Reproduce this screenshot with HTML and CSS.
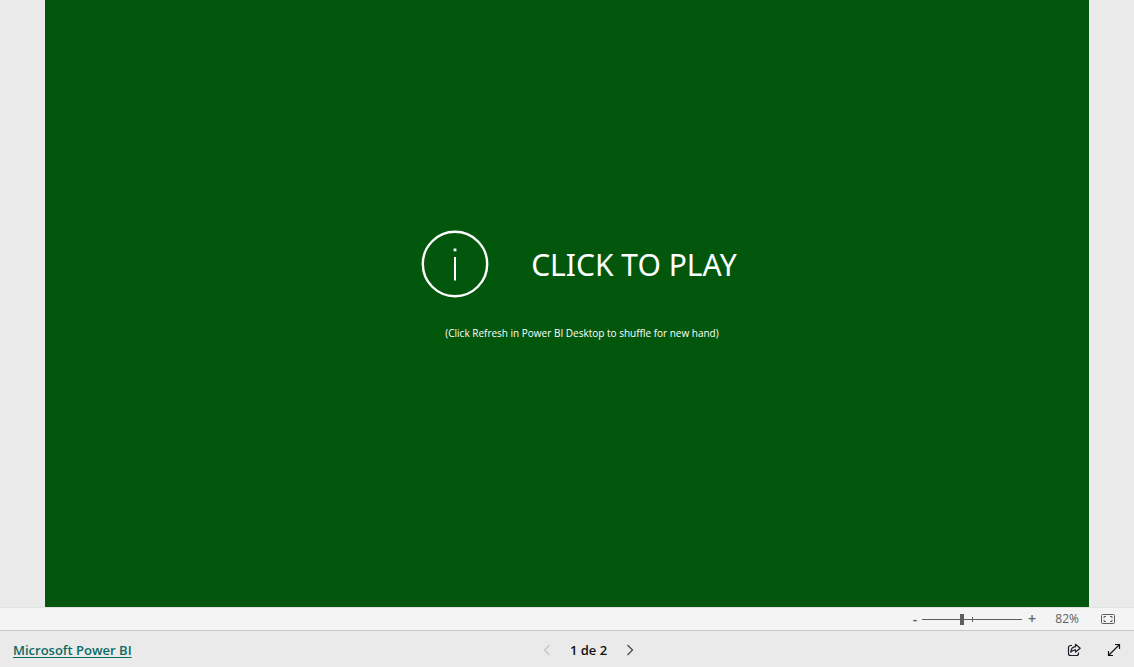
FILE: index.html
```html
<!DOCTYPE html>
<html lang="es">
<head>
<meta charset="utf-8">
<meta name="viewport" content="width=device-width, initial-scale=1">
<title>Microsoft Power BI</title>
<link rel="stylesheet" href="styles.css">
</head>
<body>
<main class="stage">
  <section class="report">
    <button class="play" type="button">
      <svg class="play-icon" viewBox="0 0 68 68" aria-hidden="true">
        <circle cx="34" cy="34" r="32.2" fill="none" stroke="#fff" stroke-width="2.4"/>
        <path d="M34 27v23.500" stroke="#fff" stroke-width="2"/>
        <path d="M34 18.500v2.800" stroke="#fff" stroke-width="2.800"/>
      </svg>
      <span>CLICK TO PLAY</span>
    </button>
    <p class="hint">(Click Refresh in Power BI Desktop to shuffle for new hand)</p>
  </section>
</main>
<div class="zoombar">
  <button class="step" type="button" aria-label="Zoom out">-</button>
  <div class="slider"><input type="range" min="0" max="100" value="40" aria-label="Zoom"></div>
  <button class="step" type="button" aria-label="Zoom in">+</button>
  <span class="percent">82%</span>
  <button class="fit" type="button" aria-label="Fit to page">
    <svg width="14" height="12" viewBox="0 0 14 12" fill="none" stroke="#605e5c" aria-hidden="true">
      <rect x=".5" y="1.500" width="13" height="9" rx="1"/>
      <path d="M5 3.500H3V5.200M3 6.800V8.500H5M9 3.500H11V5.200M11 6.800V8.500H9"/>
    </svg>
  </button>
</div>
<footer class="footer">
  <div class="brand"><a href="#">Microsoft Power BI</a></div>
  <nav class="pager" aria-label="Pages">
    <button type="button" aria-label="Previous page" disabled>
      <svg width="8" height="12" viewBox="0 0 8 12" fill="none" stroke="#c3c3c3" stroke-width="1.2" aria-hidden="true"><path d="M6.500 1 1.500 6l5 5"/></svg>
    </button>
    <span>1 de 2</span>
    <button type="button" aria-label="Next page">
      <svg width="8" height="12" viewBox="0 0 8 12" fill="none" stroke="#444" stroke-width="1.2" aria-hidden="true"><path d="m1.500 1 5 5-5 5"/></svg>
    </button>
  </nav>
  <div class="actions">
    <button type="button" aria-label="Share">
      <svg width="14" height="14" viewBox="0 0 14 14" fill="none" stroke="#201a2b" stroke-width="1.200" stroke-linejoin="round" aria-hidden="true">
        <path d="M5 2.500H3.500a2 2 0 0 0-2 2V10.500a2 2 0 0 0 2 2H9.500a2 2 0 0 0 2-2V9.500"/>
        <path d="M8.500 1.300 13.200 5.200 8.500 9V6.800C6.200 6.800 5 7.500 3.800 9.200 4 6 5.500 3.900 8.500 3.700Z"/>
      </svg>
    </button>
    <button type="button" aria-label="Full screen">
      <svg width="14" height="14" viewBox="0 0 14 14" fill="none" stroke="#111" stroke-width="1.2" aria-hidden="true">
        <path d="M1.500 12.500 12.500 1.500M8 1.500h4.500V6M1.500 8v4.500H6"/>
      </svg>
    </button>
  </div>
</footer>
</body>
</html>
```
FILE: styles.css
```css
* {
  box-sizing: border-box;
}

body {
  margin: 0;
  min-height: 100vh;
  display: flex;
  flex-direction: column;
  background: #eaeaea;
  font-family: "Segoe UI", "Open Sans", "Noto Sans", sans-serif;
}

button {
  display: flex;
  align-items: center;
  justify-content: center;
  padding: 0;
  border: 0;
  background: none;
  color: inherit;
  font: inherit;
}

.stage {
  flex: 1;
  display: flex;
  padding: 0 45px;
}

.report {
  flex: 1;
  display: flex;
  flex-direction: column;
  align-items: center;
  justify-content: center;
  gap: 27px;
  padding: 0 0 37px 24px;
  background: #03570d;
  color: #fff;
}

.play {
  gap: 42px;
  font-family: "Segoe UI", "Noto Sans", sans-serif;
  font-size: 30px;
  line-height: 44px;
}

.play span {
  padding-top: 3px;
}

.play-icon {
  width: 68px;
  height: 68px;
}

.hint {
  margin: 0;
  padding-left: 6px;
  font-size: 10px;
  line-height: 16px;
}

.zoombar {
  display: flex;
  align-items: center;
  justify-content: flex-end;
  height: 24px;
  padding-right: 19px;
  border-top: 1px solid #e1e1e1;
  border-bottom: 1px solid #c8c8c8;
  background: #f4f4f4;
  color: #605e5c;
  font-size: 12px;
  line-height: 16px;
}

.step {
  width: 20px;
  font-size: 14px;
  font-weight: 600;
}

.step:first-child {
  width: 14px;
}

.slider {
  position: relative;
  display: flex;
  width: 100px;
}

.slider::after {
  content: "";
  position: absolute;
  left: 50px;
  top: 3px;
  width: 1px;
  height: 5px;
  background: #605e5c;
}

.slider input {
  appearance: none;
  width: 100%;
  height: 11px;
  margin: 0;
  background: linear-gradient(#605e5c, #605e5c) center / 100% 1px no-repeat;
}

.slider input::-webkit-slider-thumb {
  appearance: none;
  width: 4px;
  height: 11px;
  background: #605e5c;
}

.percent {
  width: 37px;
  text-align: right;
}

.fit {
  margin-left: 22px;
}

.footer {
  display: grid;
  grid-template-columns: 1fr auto 1fr;
  align-items: center;
  height: 36px;
  padding: 2px 13px 0;
  font-size: 13px;
  font-weight: 600;
  line-height: 20px;
}

.brand a {
  color: #0b6a63;
  text-underline-offset: 2px;
}

.pager {
  display: flex;
  align-items: center;
  gap: 19px;
  padding-left: 43px;
  color: #111;
}

.actions {
  display: flex;
  justify-content: flex-end;
  gap: 26px;
}
```
